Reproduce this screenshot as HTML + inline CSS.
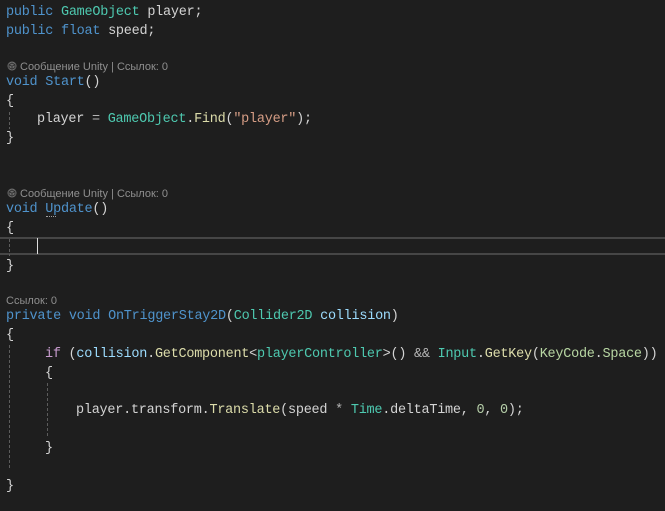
<!DOCTYPE html>
<html><head><meta charset="utf-8">
<style>
html,body{margin:0;padding:0;background:#1e1e1e;width:665px;height:511px;overflow:hidden}
.l{position:absolute;left:6px;height:18px;margin-top:2px;font:13.5px/18px "Liberation Mono",monospace;letter-spacing:-.25px;color:#d4d4d4;white-space:pre}
.c{position:absolute;left:6px;height:14px;font:11px/14px "Liberation Sans","Noto Sans CJK SC",sans-serif;color:#8f8f8f;white-space:pre}
.k{color:#4f93cc}.t{color:#4ec9b0}.m{color:#dcdcaa}.s{color:#d69d85}.p{color:#9cdcfe}.i{color:#c89ccf}.n{color:#b5cea8}.o{color:#b4b4b4}.e{color:#b8d7a3}
.g{position:absolute;width:1px;background:repeating-linear-gradient(to bottom,#5c5c5c 0,#5c5c5c 3px,transparent 3px,transparent 5px)}
.h{position:absolute;left:0;width:665px;height:2px;background:#464646}
</style></head><body>
<div class="l" style="top:2px"><span class="k">public</span> <span class="t">GameObject</span> player;</div>
<div class="l" style="top:21px"><span class="k">public</span> <span class="k">float</span> speed;</div>
<svg style="position:absolute;left:7px;top:61px" width="10" height="10" viewBox="0 0 10 10"><circle cx="5" cy="5" r="4.5" fill="#6e6e6e"/><path d="M5 2L8 3.6V6.6L5 8.2L2 6.6V3.6ZM2 3.6L5 5.2L8 3.6M5 5.2V8.2" fill="none" stroke="#2a2a2a" stroke-width=".8"/></svg>
<div class="c" style="top:60px;left:20px">Сообщение Unity | Ссылок: 0</div>
<div class="l" style="top:72px"><span class="k">void</span> <span class="k">Start</span>()</div>
<div class="l" style="top:91px">{</div>
<div class="l" style="top:109px;left:37px">player <span class="o">=</span> <span class="t">GameObject</span>.<span class="m">Find</span>(<span class="s">"player"</span>);</div>
<div class="l" style="top:128px">}</div>
<div class="g" style="left:9px;top:112px;height:17px"></div>
<svg style="position:absolute;left:7px;top:188px" width="10" height="10" viewBox="0 0 10 10"><circle cx="5" cy="5" r="4.5" fill="#6e6e6e"/><path d="M5 2L8 3.6V6.6L5 8.2L2 6.6V3.6ZM2 3.6L5 5.2L8 3.6M5 5.2V8.2" fill="none" stroke="#2a2a2a" stroke-width=".8"/></svg>
<div class="c" style="top:187px;left:20px">Сообщение Unity | Ссылок: 0</div>
<div class="l" style="top:199px"><span class="k">void</span> <span class="k">Update</span>()</div>
<div style="position:absolute;left:46px;top:216px;width:10px;border-top:1px dotted #a0a0a0"></div>
<div class="l" style="top:218px">{</div>
<div class="h" style="top:237px"></div>
<div class="h" style="top:253px"></div>
<div style="position:absolute;left:37px;top:238px;width:1px;height:16px;background:#dcdcdc"></div>
<div class="g" style="left:9px;top:239px;height:17px"></div>
<div class="l" style="top:256px">}</div>
<div class="c" style="top:294px">Ссылок: 0</div>
<div class="l" style="top:306px"><span class="k">private</span> <span class="k">void</span> <span class="k">OnTriggerStay2D</span>(<span class="t">Collider2D</span> <span class="p">collision</span>)</div>
<div class="l" style="top:325px">{</div>
<div class="l" style="top:344px;left:45px"><span class="i">if</span> (<span class="p">collision</span>.<span class="m">GetComponent</span>&lt;<span class="t">playerController</span>&gt;() <span class="o">&amp;&amp;</span> <span class="t">Input</span>.<span class="m">GetKey</span>(<span class="e">KeyCode</span>.<span class="e">Space</span>))</div>
<div class="l" style="top:363px;left:45px">{</div>
<div class="l" style="top:400px;left:76px">player.transform.<span class="m">Translate</span>(speed <span class="o">*</span> <span class="t">Time</span>.deltaTime, <span class="n">0</span>, <span class="n">0</span>);</div>
<div class="l" style="top:438px;left:45px">}</div>
<div class="l" style="top:476px">}</div>
<div class="g" style="left:9px;top:345px;height:125px"></div>
<div class="g" style="left:47px;top:383px;height:54px"></div>
</body></html>
